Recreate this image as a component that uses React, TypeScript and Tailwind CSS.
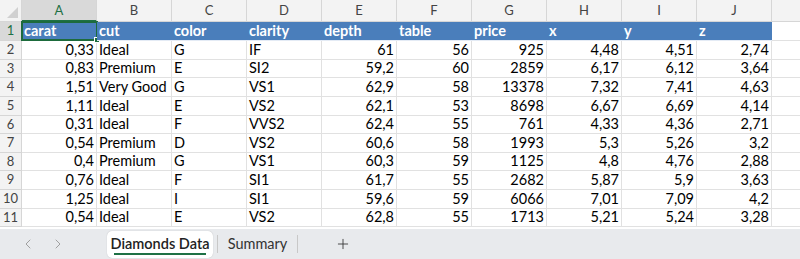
import { ChevronLeft, ChevronRight, Plus } from 'lucide-react'

const cols = ['A', 'B', 'C', 'D', 'E', 'F', 'G', 'H', 'I', 'J']
const heads = ['carat', 'cut', 'color', 'clarity', 'depth', 'table', 'price', 'x', 'y', 'z']

// text columns are left aligned, the rest are numbers
const textCols = [1, 2, 3]

const rows: string[][] = [
  ['0,33', 'Ideal', 'G', 'IF', '61', '56', '925', '4,48', '4,51', '2,74'],
  ['0,83', 'Premium', 'E', 'SI2', '59,2', '60', '2859', '6,17', '6,12', '3,64'],
  ['1,51', 'Very Good', 'G', 'VS1', '62,9', '58', '13378', '7,32', '7,41', '4,63'],
  ['1,11', 'Ideal', 'E', 'VS2', '62,1', '53', '8698', '6,67', '6,69', '4,14'],
  ['0,31', 'Ideal', 'F', 'VVS2', '62,4', '55', '761', '4,33', '4,36', '2,71'],
  ['0,54', 'Premium', 'D', 'VS2', '60,6', '58', '1993', '5,3', '5,26', '3,2'],
  ['0,4', 'Premium', 'G', 'VS1', '60,3', '59', '1125', '4,8', '4,76', '2,88'],
  ['0,76', 'Ideal', 'F', 'SI1', '61,7', '55', '2682', '5,87', '5,9', '3,63'],
  ['1,25', 'Ideal', 'I', 'SI1', '59,6', '59', '6066', '7,01', '7,09', '4,2'],
  ['0,54', 'Ideal', 'E', 'VS2', '62,8', '55', '1713', '5,21', '5,24', '3,28'],
]

function Corner() {
  return (
    <div className="relative border-b border-r border-[#d6d6d6] bg-[#f3f3f3]">
      <svg className="absolute bottom-[3px] right-[3px]" width="11" height="11" viewBox="0 0 11 11">
        <polygon points="11,0 11,11 0,11" fill="#d0d0d0" />
      </svg>
    </div>
  )
}

export default function App() {
  return (
    <div
      className="flex h-[259px] w-[800px] flex-col overflow-hidden bg-white text-[14.5px] text-black"
      style={{ fontFamily: 'Lato, "Open Sans", sans-serif' }}
    >
      <div className="grid grid-cols-[22px_repeat(10,75px)_1fr] grid-rows-[22px_19px_19px_18px_19px_19px_18px_19px_18px_19px_19px_18px]">
        <Corner />
        {cols.map((c, i) => (
          <div
            key={c}
            className={
              i === 0
                ? 'flex items-center justify-center border-b-2 border-r border-b-[#1e7145] border-r-[#d6d6d6] bg-[#d9d9d9] pt-[1px] text-[13px] text-[#1e7145]'
                : 'flex items-center justify-center border-b border-r border-[#d6d6d6] bg-[#f3f3f3] text-[13px] text-[#444]'
            }
          >
            {c}
          </div>
        ))}
        <div className="border-b border-[#d6d6d6] bg-[#f3f3f3]" />

        {/* row 1: table header */}
        <div className="flex items-center justify-center border-b border-r border-r-[#1e7145] border-b-[#d6d6d6] bg-[#d9d9d9] text-[13px] text-[#1e7145]">
          1
        </div>
        {heads.map((h, i) => (
          <div
            key={h}
            className="relative flex items-center border-b border-b-[#e4ebf5] bg-[#4a7ebb] pl-[2px] font-bold leading-none text-white"
          >
            {h}
            {i === 0 && (
              <div className="absolute -left-[1px] -top-[1px] bottom-[-1px] right-[-1px] border-2 border-[#1d6b3c]">
                <div className="absolute -bottom-[4px] -right-[4px] h-[6px] w-[6px] border border-white bg-[#1d6b3c]" />
              </div>
            )}
          </div>
        ))}
        <div className="border-b border-[#e1e1e1]" />

        {rows.map((r, ri) => (
          <div key={ri} className="contents">
            <div className="flex items-center justify-center border-b border-r border-[#d6d6d6] bg-[#f3f3f3] text-[13px] text-[#444]">
              {ri + 2}
            </div>
            {r.map((v, ci) => (
              <div
                key={ci}
                className={
                  textCols.includes(ci)
                    ? 'flex items-center whitespace-nowrap border-b border-r border-[#e1e1e1] pl-[2px] leading-none'
                    : 'flex items-center justify-end whitespace-nowrap border-b border-r border-[#e1e1e1] pr-[2px] leading-none'
                }
              >
                {v}
              </div>
            ))}
            <div className="border-b border-[#e1e1e1]" />
          </div>
        ))}
      </div>

      <div className="h-[2px] w-full" />

      <div className="flex h-[30px] items-center bg-[#e8eaed] text-[14.5px] text-[#333]">
        <div className="flex w-[107px] items-center gap-[14px] pl-[20px] text-[#9a9a9a]">
          <ChevronLeft size={16} strokeWidth={1.4} />
          <ChevronRight size={16} strokeWidth={1.4} />
        </div>
        <div className="relative flex h-[27px] w-[106px] items-center justify-center rounded-[5px] bg-white font-semibold text-[#222] shadow-[0_0_1px_rgba(0,0,0,0.25)]">
          Diamonds Data
          <div className="absolute bottom-[3px] left-[7px] right-[7px] h-[2px] bg-[#1e7145]" />
        </div>
        <div className="ml-[4px] h-[18px] w-px bg-[#c8c8c8]" />
        <div className="w-[79px] text-center text-[#333]">Summary</div>
        <div className="h-[18px] w-px bg-[#c8c8c8]" />
        <div className="ml-[37px] text-[#333]">
          <Plus size={16} strokeWidth={1.3} />
        </div>
      </div>
    </div>
  )
}
